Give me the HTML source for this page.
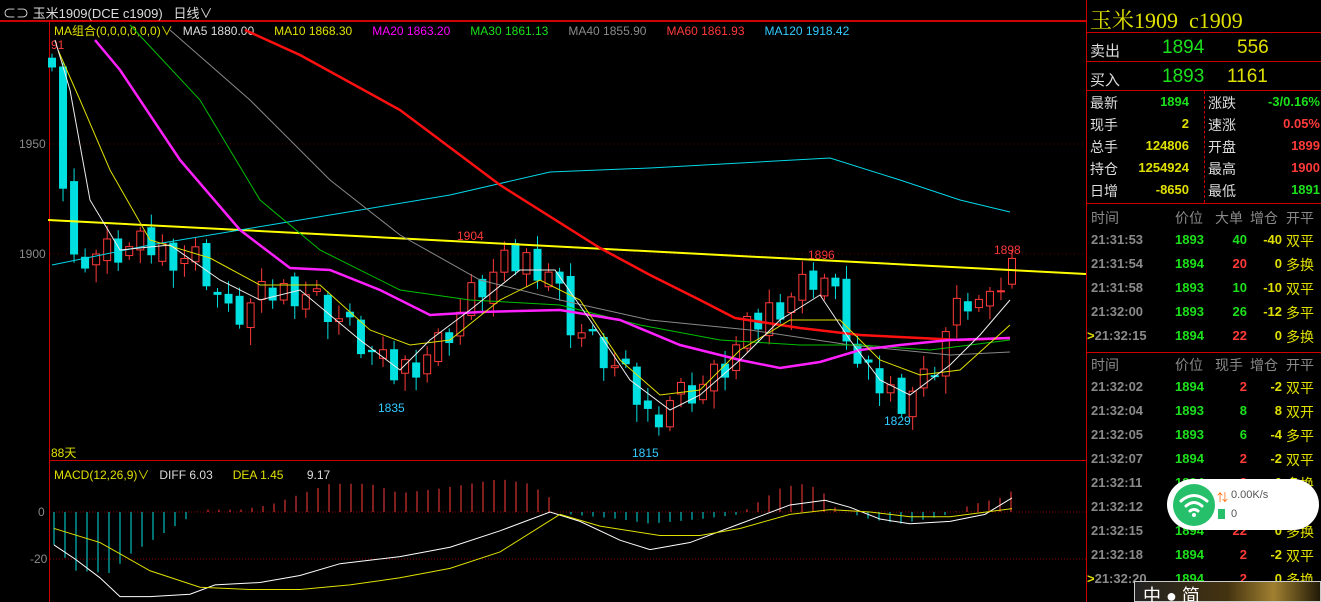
<!DOCTYPE html>
<html><head><meta charset="utf-8">
<style>
html,body{margin:0;width:1321px;height:602px;background:#000;overflow:hidden;font-family:"Liberation Sans","Noto Sans CJK SC",sans-serif;position:relative}
.a{position:absolute;white-space:nowrap}
#rp{position:absolute;left:1086px;top:0;width:235px;height:602px;border-left:1px solid #c00}
.hl{position:absolute;left:0;width:235px;height:1px;background:#c00}
.g{color:#1ce01c}.y{color:#e0e000}.r{color:#ff3a3a}.gr{color:#8a8a8a}.w{color:#ddd}
</style></head><body>
<div class="a" style="left:0;top:0;width:1086px;height:20px;border-bottom:2px solid #c00"></div>
<div class="a w" style="left:3px;top:3px;font-size:13px">⊂⊃ 玉米1909(DCE c1909)&nbsp;&nbsp;&nbsp;日线∨</div>
<div class="a" style="left:49px;top:21px;width:1px;height:581px;background:#c00"></div>
<div class="a" style="left:49px;top:460px;width:1037px;height:1px;background:#c00"></div>
<div class="a" style="top:22px;left:54px;font-size:12px"><span class="y">MA组合(0,0,0,0,0,0)∨</span>&nbsp;&nbsp;&nbsp;<span class="w">MA5 1880.00</span>&nbsp;&nbsp;&nbsp;&nbsp;&nbsp;&nbsp;<span class="y">MA10 1868.30</span>&nbsp;&nbsp;&nbsp;&nbsp;&nbsp;&nbsp;<span style="color:#f0f">MA20 1863.20</span>&nbsp;&nbsp;&nbsp;&nbsp;&nbsp;&nbsp;<span class="g">MA30 1861.13</span>&nbsp;&nbsp;&nbsp;&nbsp;&nbsp;&nbsp;<span class="gr">MA40 1855.90</span>&nbsp;&nbsp;&nbsp;&nbsp;&nbsp;&nbsp;<span class="r">MA60 1861.93</span>&nbsp;&nbsp;&nbsp;&nbsp;&nbsp;&nbsp;<span style="color:#3cf">MA120 1918.42</span></div>
<div class="a" style="top:466px;left:54px;font-size:12px"><span class="y">MACD(12,26,9)∨</span>&nbsp;&nbsp;&nbsp;<span class="w">DIFF 6.03</span>&nbsp;&nbsp;&nbsp;&nbsp;&nbsp;&nbsp;<span class="y">DEA 1.45</span>&nbsp;&nbsp;&nbsp;&nbsp;&nbsp;&nbsp;&nbsp;<span class="w">9.17</span></div>
<div class="a gr" style="left:19px;top:137px;font-size:12px">1950</div>
<div class="a gr" style="left:19px;top:247px;font-size:12px">1900</div>
<div class="a gr" style="left:38px;top:505px;font-size:12px">0</div>
<div class="a gr" style="left:30px;top:552px;font-size:12px">-20</div>
<div class="a r" style="left:51px;top:38px;font-size:12px">91</div>
<div class="a y" style="left:51px;top:444px;font-size:12px">88天</div>
<div class="a r" style="left:457px;top:229px;font-size:12px">1904</div>
<div class="a r" style="left:808px;top:248px;font-size:12px">1896</div>
<div class="a r" style="left:994px;top:243px;font-size:12px">1898</div>
<div class="a" style="left:378px;top:401px;font-size:12px;color:#3cf">1835</div>
<div class="a" style="left:632px;top:446px;font-size:12px;color:#3cf">1815</div>
<div class="a" style="left:884px;top:414px;font-size:12px;color:#3cf">1829</div>
<svg id="sv" class="a" style="left:0;top:0" width="1086" height="602"></svg>

<div id="rp">
<div class="a y" style="left:3px;top:4px;font-size:22px;font-family:'Liberation Serif','Noto Serif CJK SC',serif">玉米1909&nbsp;&nbsp;c1909</div>
<div class="hl" style="top:32px"></div>
<div class="a w" style="left:3px;top:40px;font-size:15px">卖出</div>
<div class="a g" style="left:75px;top:37px;font-size:19px">1894</div>
<div class="a y" style="left:150px;top:37px;font-size:19px">556</div>
<div class="hl" style="top:61px"></div>
<div class="a w" style="left:3px;top:69px;font-size:15px">买入</div>
<div class="a g" style="left:75px;top:66px;font-size:19px">1893</div>
<div class="a y" style="left:140px;top:66px;font-size:19px">1161</div>
<div class="hl" style="top:90px"></div>
<div class="a" style="left:117px;top:91px;height:112px;border-left:1px dashed #c00"></div>
<div id="st"></div>
<div class="hl" style="top:203px"></div>
<div class="hl" style="top:352px"></div>
<div id="tb"></div>
</div>

<div class="a" style="left:1167px;top:479px;width:152px;height:51px;background:#fff;border-radius:26px"></div>
<div class="a" style="left:1173px;top:484px;width:42px;height:42px;background:#27c06a;border-radius:50%"></div>
<svg class="a" style="left:1177px;top:490px" width="34" height="30"><g fill="none" stroke="#fff" stroke-width="3" stroke-linecap="round"><path d="M4 11 Q17 0 30 11"/><path d="M9 16 Q17 9 25 16"/><path d="M13 21 Q17 18 21 21"/></g><circle cx="17" cy="25" r="2" fill="#fff"/></svg>
<div class="a" style="left:1217px;top:489px;font-size:11px;color:#f60">⇅</div>
<div class="a" style="left:1231px;top:489px;font-size:11px;color:#555">0.00K/s</div>
<div class="a" style="left:1218px;top:509px;width:7px;height:10px;background:#27c06a"></div>
<div class="a" style="left:1231px;top:508px;font-size:11px;color:#555">0</div>
<div class="a" style="left:1134px;top:581px;width:187px;height:21px;background:linear-gradient(90deg,#222,#443310 50%,#a08030 75%,#221a08);border:1px solid #ccc;box-sizing:border-box"></div>
<div class="a" style="left:1143px;top:582px;font-size:18px;color:#fff">中 ● 简</div>

<script>
var NS="http://www.w3.org/2000/svg",sv=document.getElementById('sv');
function el(t,a){var e=document.createElementNS(NS,t);for(var k in a)e.setAttribute(k,a[k]);sv.appendChild(e);return e}
function Y(p){return 254-(p-1900)*2.2}
function it(a,x){for(var i=0;i<a.length-1;i++)if(x<=a[i+1][0]){var t=(x-a[i][0])/(a[i+1][0]-a[i][0]);return a[i][1]+t*(a[i+1][1]-a[i][1])}return a[a.length-1][1]}
[144,254].forEach(function(y){el('line',{x1:50,x2:1086,y1:y,y2:y,stroke:'#600',"stroke-dasharray":'1,3'})});
el('line',{x1:50,x2:1086,y1:512,y2:512,stroke:'#800',"stroke-dasharray":'1,2'});
el('line',{x1:50,x2:1086,y1:559,y2:559,stroke:'#800',"stroke-dasharray":'1,2'});
var K=[[52,1985],[63,1930],[74,1900],[100,1900],[150,1903],[200,1898],[230,1870],[270,1882],[300,1885],[330,1875],[370,1855],[390,1845],[410,1850],[440,1860],[470,1880],[500,1893],[530,1898],[550,1893],[570,1870],[600,1855],[630,1840],[650,1825],[670,1835],[700,1840],[720,1845],[740,1860],[770,1875],[800,1885],[820,1893],[840,1875],[860,1845],[880,1840],[900,1835],[930,1845],[950,1870],[970,1880],[990,1875],[1012,1898]];
var n=88,dx=960/(n-1),prev=1992;
for(var i=0;i<n;i++){
 var x=52+i*dx,nz=((i*37)%11-5)*1.6;
 var c=it(K,x)+(i>2&&i<n-1?nz:0),o=prev+((i*7)%5-2)*1.5,s=((i*13)%7);
 prev=c;
 var up=c>=o,col=up?'#ff3a3a':'#00e0e0';
 var hi=Math.max(o,c)+2+s%3*2,lo=Math.min(o,c)-2-s%4*2;
 el('line',{x1:x,x2:x,y1:Y(hi),y2:Y(lo),stroke:col});
 var t=Y(Math.max(o,c)),h=Math.max(1,Math.abs(o-c)*2.2);
 el('rect',{x:x-3.5,y:t,width:7,height:h,fill:up?'#000':col,stroke:col});
}
function pl(pts,col,w){el('polyline',{points:pts.map(function(p){return p.join(',')}).join(' '),fill:'none',stroke:col,"stroke-width":w||1})}
pl([[48,220],[1086,274]],'#ffff00',2);
pl([[52,265],[150,245],[300,220],[450,195],[550,172],[650,168],[830,158],[900,180],[960,200],[1010,212]],'#00d8e8');
pl([[170,30],[250,100],[330,180],[400,235],[480,280],[560,300],[650,320],[750,330],[850,345],[950,355],[1010,352]],'#888');
pl([[130,25],[200,100],[260,200],[320,250],[400,290],[470,300],[560,305],[640,325],[720,340],[800,345],[860,345],[930,350],[1010,340]],'#00c000');
pl([[245,30],[300,55],[400,110],[500,185],[600,248],[650,275],[700,300],[735,318],[800,328],[860,335],[920,338],[960,340],[1010,338]],'#ff1010',2.5);
pl([[95,40],[120,70],[180,160],[240,230],[290,268],[330,270],[380,290],[430,315],[480,312],[560,310],[620,320],[680,345],[740,360],[780,368],[820,362],[860,350],[900,345],[950,340],[1010,338]],'#ff20ff',2.5);
pl([[58,50],[80,100],[110,170],[150,240],[210,258],[260,285],[320,285],[370,330],[410,345],[450,340],[500,300],[540,280],[580,300],[620,360],[660,395],[700,390],[740,350],[790,320],[840,320],[880,360],[920,375],[960,370],[1010,325]],'#e0e000');
pl([[55,40],[70,90],[90,200],[120,250],[170,245],[220,280],[260,300],[300,290],[360,340],[400,370],[430,340],[470,310],[520,270],[555,270],[590,320],[630,380],[670,410],[700,395],[740,360],[780,320],[820,295],[850,340],[880,380],[910,395],[950,365],[980,335],[1010,300]],'#eee');
var D=[[54,-14],[75,-20],[100,-28],[120,-36],[150,-36],[190,-35],[215,-31],[260,-30],[300,-27],[340,-22],[400,-19],[450,-15],[500,-8],[550,0],[580,-4],[620,-12],[650,-16],[690,-13],[740,-5],[790,3],[825,5],[850,2],[880,-3],[910,-5],[950,-4],[985,-1],[1012,6]];
var E=[[54,-7],[100,-13],[150,-25],[200,-32],[250,-33],[300,-33],[350,-31],[400,-28],[450,-24],[500,-17],[560,-1],[600,-6],[660,-10],[700,-10],[740,-7],[790,-1],[830,1],[870,0],[910,-2],[950,-2],[1012,1.45]];
var H=[[54,-14],[76,-25],[110,-26],[130,-18],[190,-2],[200,1],[240,1],[270,3],[330,12],[370,12],[400,8],[440,10],[470,12],[500,14],[530,12],[550,6],[560,0],[570,-1],[620,-3],[650,-5],[700,-3],[740,-1],[750,2],[780,10],[800,12],[820,10],[835,2],[845,0],[870,-3],[900,-5],[940,-2],[955,0],[970,3],[1000,6],[1012,9]];
function MY(v){return 512-v*2.35}
for(var x=54;x<=1012;x+=11){var b=it(H,x);el('line',{x1:x,x2:x,y1:512,y2:MY(b),stroke:b>=0?'#ff3a3a':'#00e0e0'})}
pl(D.map(function(p){return [p[0],MY(p[1])]}),'#fff');
pl(E.map(function(p){return [p[0],MY(p[1])]}),'#e0e000');
var st=document.getElementById('st'),h='';
var L=[['最新','1894','g','涨跌','-3/0.16%','g'],['现手','2','y','速涨','0.05%','r'],['总手','124806','y','开盘','1899','r'],['持仓','1254924','y','最高','1900','r'],['日增','-8650','y','最低','1891','g']];
L.forEach(function(r,i){var t=93+i*22;
h+='<div class="a w" style="left:3px;top:'+t+'px;font-size:14px">'+r[0]+'</div><div class="a '+r[2]+'" style="right:133px;top:'+(t+1)+'px;font-size:13px;font-weight:bold">'+r[1]+'</div><div class="a w" style="left:121px;top:'+t+'px;font-size:14px">'+r[3]+'</div><div class="a '+r[5]+'" style="right:2px;top:'+(t+1)+'px;font-size:13px;font-weight:bold">'+r[4]+'</div>'});
st.innerHTML=h;
function tbl(top,hd,rows){var s='<div class="a gr" style="left:4px;top:'+top+'px;font-size:14px">时间</div><div class="a gr" style="left:88px;top:'+top+'px;font-size:14px">价位</div><div class="a gr" style="left:128px;top:'+top+'px;font-size:14px">'+hd+'</div><div class="a gr" style="left:163px;top:'+top+'px;font-size:14px">增仓</div><div class="a gr" style="left:199px;top:'+top+'px;font-size:14px">开平</div>';
rows.forEach(function(r,i){var t=top+24+i*24;
s+='<div class="a gr" style="left:'+(r[5]?0:4)+'px;top:'+t+'px;font-size:13px;font-weight:bold">'+(r[5]?'<span class="y">&gt;</span>':'')+r[0]+'</div><div class="a g" style="left:88px;top:'+t+'px;font-size:13px;font-weight:bold">'+r[1]+'</div><div class="a '+r[6]+'" style="right:75px;top:'+t+'px;font-size:13px;font-weight:bold">'+r[2]+'</div><div class="a y" style="right:40px;top:'+t+'px;font-size:13px;font-weight:bold">'+r[3]+'</div><div class="a y" style="left:199px;top:'+(t-1)+'px;font-size:14px">'+r[4]+'</div>'});return s}
document.getElementById('tb').innerHTML=tbl(208,'大单',[['21:31:53','1893','40','-40','双平',0,'g'],['21:31:54','1894','20','0','多换',0,'r'],['21:31:58','1893','10','-10','双平',0,'g'],['21:32:00','1893','26','-12','多平',0,'g'],['21:32:15','1894','22','0','多换',1,'r']])+
tbl(355,'现手',[['21:32:02','1894','2','-2','双平',0,'r'],['21:32:04','1893','8','8','双开',0,'g'],['21:32:05','1893','6','-4','多平',0,'g'],['21:32:07','1894','2','-2','双平',0,'r'],['21:32:11','1894','2','0','多换',0,'r'],['21:32:12','1894','2','0','多换',0,'r'],['21:32:15','1894','22','0','多换',0,'r'],['21:32:18','1894','2','-2','双平',0,'r'],['21:32:20','1894','2','0','多换',1,'r']]);
</script>
</body></html>
